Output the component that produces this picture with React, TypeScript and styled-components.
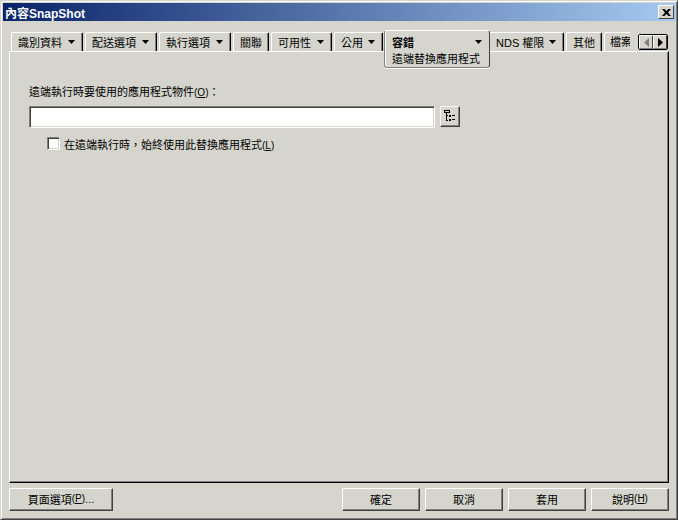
import React, {FC} from 'react';
import styled, {createGlobalStyle} from 'styled-components';

const cjk = `"Liberation Sans", "Noto Sans CJK TC", sans-serif`;
const face = '#d5d5cd';

const GlobalStyle = createGlobalStyle`
    html, body {
        margin: 0;
        padding: 0;
        background: ${face};
    }
    body {
        font-family: ${cjk};
        font-size: 11px;
        color: #000;
    }
`

interface ITab {
    label: string,
    width: number,
    menu?: boolean,
}

const leftTabs: ITab[] = [
    {label: '識別資料', width: 72, menu: true},
    {label: '配送選項', width: 72, menu: true},
    {label: '執行選項', width: 72, menu: true},
    {label: '關聯', width: 36},
    {label: '可用性', width: 61, menu: true},
    {label: '公用', width: 49, menu: true},
];

const rightTabs: ITab[] = [
    {label: 'NDS 權限', width: 75, menu: true},
    {label: '其他', width: 36},
];

const Arrow: FC = () => (
    <svg width="7" height="4" viewBox="0 0 7 4">
        <path d="M0 0h7L3.5 4z" fill="#000"/>
    </svg>
);

const Key: FC<{k: string}> = ({k}) => <Small>(<u>{k}</u>)</Small>;

const App: FC = () => {
    return (
        <Window>
            <GlobalStyle/>
            <TitleBar>
                <Title>內容SnapShot</Title>
                <CloseButton>
                    <svg width="9" height="7" viewBox="0 0 9 7">
                        <path d="M0 0h2.500l2 2 2-2H9L6 3.500 9 7H6.500l-2-2-2 2H0l3-3.500z" fill="#000"/>
                    </svg>
                </CloseButton>
            </TitleBar>
            <TabStrip>
                {leftTabs.map(t => (
                    <Tab key={t.label} $width={t.width}>
                        {t.label}
                        {t.menu && <Arrow/>}
                    </Tab>
                ))}
                <ActiveTab>
                    <ActiveHead>
                        <strong>容錯</strong>
                        <Arrow/>
                    </ActiveHead>
                    <SubTab>遠端替換應用程式</SubTab>
                </ActiveTab>
                {rightTabs.map(t => (
                    <Tab key={t.label} $width={t.width}>
                        {t.label}
                        {t.menu && <Arrow/>}
                    </Tab>
                ))}
                <CutTab>檔案</CutTab>
                <Scroller>
                    <ScrollButton>
                        <svg width="5" height="9" viewBox="0 0 5 9">
                            <path d="M5 0v9L0 4.500z" fill="#808080"/>
                        </svg>
                    </ScrollButton>
                    <ScrollButton>
                        <svg width="5" height="9" viewBox="0 0 5 9">
                            <path d="M0 0v9l5-4.500z" fill="#000"/>
                        </svg>
                    </ScrollButton>
                </Scroller>
            </TabStrip>
            <Panel>
                <FieldLabel>遠端執行時要使用的應用程式物件<Key k="O"/>：</FieldLabel>
                <FieldRow>
                    <TextInput/>
                    <BrowseButton>
                        <svg width="12" height="13" viewBox="0 0 12 13" shapeRendering="crispEdges">
                            <path
                                d="M0 0h6v3H0zM1 1v1h4V1zM2 3h1v8H2zM3 5h1v1H3zM3 10h1v1H3zM5 5h2v2H5zM5 9h2v2H5zM8 5h3v1H8zM8 9h3v1H8z"
                                fill="#000"
                                fillRule="evenodd"
                            />
                        </svg>
                    </BrowseButton>
                </FieldRow>
                <CheckRow>
                    <CheckBox/>
                    <span>在遠端執行時，始終使用此替換應用程式<Key k="L"/></span>
                </CheckRow>
            </Panel>
            <Footer>
                <PageButton>頁面選項<Key k="P"/>...</PageButton>
                <Actions>
                    <Button>確定</Button>
                    <Button>取消</Button>
                    <Button>套用</Button>
                    <Button>說明<Key k="H"/></Button>
                </Actions>
            </Footer>
        </Window>
    );
};

export default App;

const Window = styled.div`
    box-sizing: border-box;
    width: 678px;
    height: 520px;
    padding: 2px 1px 0 2px;
    background: ${face};
    border-top: 1px solid ${face};
    border-left: 1px solid ${face};
    border-right: 1px solid #404040;
    border-bottom: 1px solid #404040;
    box-shadow: inset 1px 1px 0 #fff, inset -1px -1px 0 #808080;
    overflow: hidden;
`

const TitleBar = styled.div`
    height: 18px;
    padding: 0 2px 0 2px;
    display: flex;
    align-items: center;
    justify-content: space-between;
    background: linear-gradient(to right, #0a246a, #a6caf0);
`

const Title = styled.div`
    color: #fff;
    font-size: 12px;
    font-weight: bold;
    white-space: nowrap;
`

const CloseButton = styled.div`
    box-sizing: border-box;
    width: 16px;
    height: 14px;
    display: flex;
    align-items: center;
    justify-content: center;
    background: ${face};
    border-top: 1px solid #fff;
    border-left: 1px solid #fff;
    border-right: 1px solid #404040;
    border-bottom: 1px solid #404040;
`

const TabStrip = styled.div`
    height: 19px;
    margin-top: 11px;
    padding-left: 8px;
    display: flex;
    align-items: flex-end;
    gap: 2px;
`

const Tab = styled.div<{$width: number}>`
    box-sizing: border-box;
    flex: none;
    width: ${p => p.$width}px;
    height: 19px;
    padding: 0 7px 0 6px;
    display: flex;
    align-items: center;
    justify-content: space-between;
    border-top: 1px solid #fff;
    border-left: 1px solid #fff;
    border-right: 1px solid #000;
    border-radius: 2px 2px 0 0;
    box-shadow: inset -1px 0 0 #808080;
    white-space: nowrap;
`

const ActiveTab = styled.div`
    box-sizing: border-box;
    position: relative;
    z-index: 1;
    flex: none;
    align-self: flex-start;
    width: 106px;
    height: 38px;
    margin: -2px -3px 0 -1px;
    padding: 0 7px;
    background: ${face};
    border: 1px solid #808080;
    border-top-color: #fff;
    border-right-color: #404040;
    border-radius: 3px;
    box-shadow: inset 1px 0 0 #fff, 0 1px 0 #fff;
`

const ActiveHead = styled.div`
    height: 21px;
    display: flex;
    align-items: center;
    justify-content: space-between;
`

const SubTab = styled.div`
    line-height: 15px;
    white-space: nowrap;
`

const CutTab = styled.div`
    box-sizing: border-box;
    flex: none;
    width: 26px;
    height: 19px;
    padding-left: 5px;
    line-height: 18px;
    overflow: hidden;
    white-space: nowrap;
    border-top: 1px solid #fff;
    border-left: 1px solid #fff;
    border-radius: 2px 0 0 0;
`

const Scroller = styled.div`
    flex: none;
    margin-left: 6px;
    margin-bottom: 1px;
    display: flex;
    border: 1px solid #000;
    border-radius: 2px;
`

const ScrollButton = styled.div`
    box-sizing: border-box;
    width: 14px;
    height: 14px;
    display: flex;
    align-items: center;
    justify-content: center;
    background: ${face};
    border-top: 1px solid #fff;
    border-left: 1px solid #fff;
    border-right: 1px solid #404040;
    border-bottom: 1px solid #808080;
`

const Panel = styled.div`
    box-sizing: border-box;
    width: 660px;
    height: 432px;
    margin-left: 6px;
    padding: 33px 19px 0;
    background: ${face};
    border-top: 1px solid #fff;
    border-left: 1px solid #fff;
    border-right: 1px solid #000;
    border-bottom: 1px solid #000;
    box-shadow: inset -1px -1px 0 #808080;
`

const FieldLabel = styled.div`
    height: 15px;
    line-height: 15px;
    white-space: nowrap;
`

const Small = styled.span`
    font-size: 10px;
`

const FieldRow = styled.div`
    margin-top: 6px;
    display: flex;
    align-items: flex-start;
    gap: 5px;
`

const TextInput = styled.div`
    box-sizing: border-box;
    width: 406px;
    height: 22px;
    background: #fff;
    border-top: 1px solid #808080;
    border-left: 1px solid #808080;
    border-right: 1px solid #fff;
    border-bottom: 1px solid #fff;
    box-shadow: inset 1px 1px 0 #404040, inset -1px -1px 0 ${face};
`

const BrowseButton = styled.div`
    box-sizing: border-box;
    width: 20px;
    height: 21px;
    display: flex;
    align-items: center;
    justify-content: center;
    background: ${face};
    border-top: 1px solid #fff;
    border-left: 1px solid #fff;
    border-right: 1px solid #404040;
    border-bottom: 1px solid #404040;
    box-shadow: inset -1px -1px 0 #808080;
`

const CheckRow = styled.div`
    margin: 8px 0 0 18px;
    display: flex;
    align-items: center;
    gap: 4px;
    height: 15px;
    white-space: nowrap;
`

const CheckBox = styled.div`
    box-sizing: border-box;
    width: 13px;
    height: 13px;
    background: #fff;
    border-top: 1px solid #808080;
    border-left: 1px solid #808080;
    border-right: 1px solid #fff;
    border-bottom: 1px solid #fff;
    box-shadow: inset 1px 1px 0 #404040, inset -1px -1px 0 ${face};
`

const Footer = styled.div`
    width: 660px;
    margin: 5px 0 0 6px;
    display: flex;
    justify-content: space-between;
`

const Actions = styled.div`
    display: flex;
    gap: 5px;
`

const Button = styled.div`
    box-sizing: border-box;
    width: 78px;
    height: 23px;
    padding-bottom: 2px;
    display: flex;
    align-items: center;
    justify-content: center;
    background: ${face};
    border-top: 1px solid #fff;
    border-left: 1px solid #fff;
    border-right: 1px solid #404040;
    border-bottom: 1px solid #404040;
    box-shadow: inset -1px -1px 0 #808080;
    white-space: nowrap;
`

const PageButton = styled(Button)`
    width: 104px;
`
